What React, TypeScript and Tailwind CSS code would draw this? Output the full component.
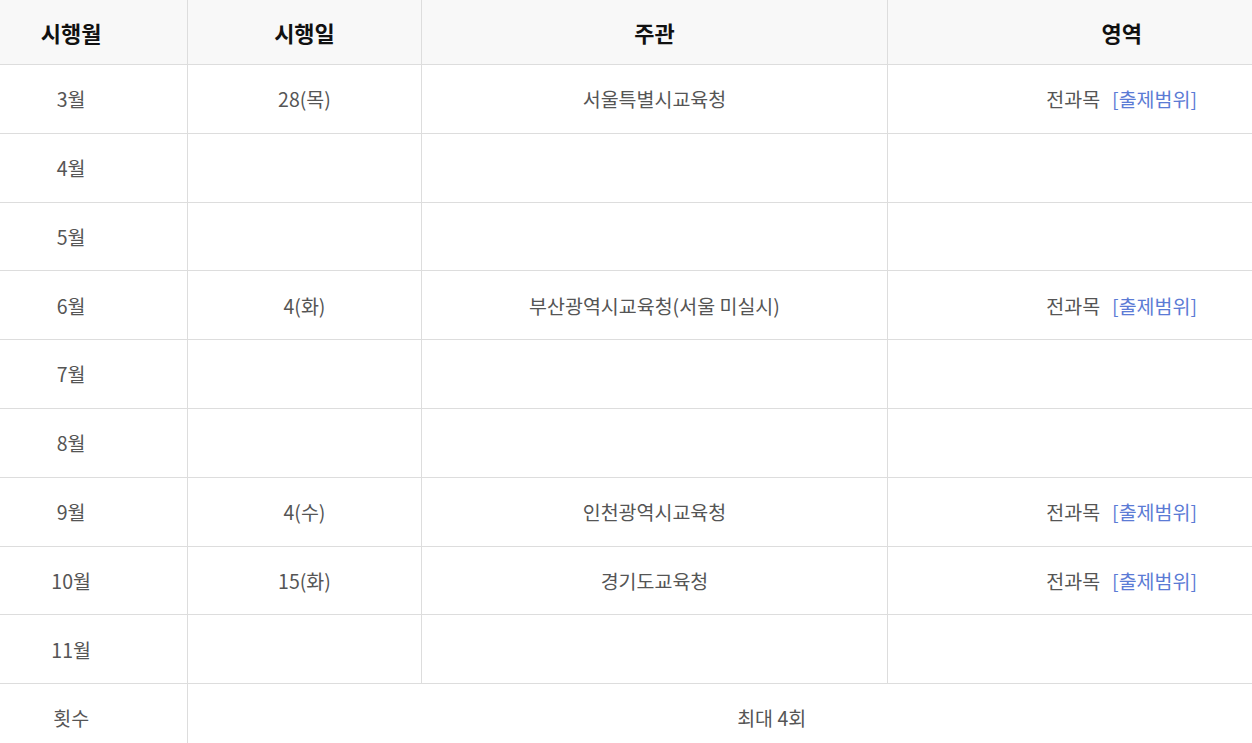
import React from 'react';

type Row = {
  month: string;
  day?: string;
  host?: string;
  area?: boolean;
};

const rows: Row[] = [
  { month: '3월', day: '28(목)', host: '서울특별시교육청', area: true },
  { month: '4월' },
  { month: '5월' },
  { month: '6월', day: '4(화)', host: '부산광역시교육청(서울 미실시)', area: true },
  { month: '7월' },
  { month: '8월' },
  { month: '9월', day: '4(수)', host: '인천광역시교육청', area: true },
  { month: '10월', day: '15(화)', host: '경기도교육청', area: true },
  { month: '11월' },
];

const cell = 'flex items-center justify-center border-r border-[#dddddd] last:border-r-0';

const App: React.FC = () => {
  return (
    <div className="w-full overflow-hidden bg-white h-[743px]">
      <div
        className="w-[1400px] ml-[-45px] text-[19.5px] text-[#555555]"
        style={{ fontFamily: '"Noto Sans CJK KR", "Noto Sans", sans-serif' }}
      >
        {/* header */}
        <div className="grid grid-cols-[1fr_1fr_2fr_2fr] h-[65px] bg-[#f8f8f8] border-b border-[#dddddd] text-[22px] font-bold text-[#111111]">
          <div className={cell}>시행월</div>
          <div className={cell}>시행일</div>
          <div className={cell}>주관</div>
          <div className={cell}>영역</div>
        </div>

        {rows.map((row) => (
          <div
            key={row.month}
            className="grid grid-cols-[1fr_1fr_2fr_2fr] h-[68.8px] border-b border-[#dddddd]"
          >
            <div className={cell}>{row.month}</div>
            <div className={cell}>{row.day}</div>
            <div className={cell}>{row.host}</div>
            <div className={cell}>
              {row.area && (
                <>
                  <span>전과목</span>
                  <span className="ml-[12px] text-[#5b7bd5]">[출제범위]</span>
                </>
              )}
            </div>
          </div>
        ))}

        <div className="grid grid-cols-[1fr_5fr] h-[68.8px] border-b border-[#dddddd]">
          <div className={cell}>횟수</div>
          <div className={cell}>최대 4회</div>
        </div>
      </div>
    </div>
  );
};

export default App;
